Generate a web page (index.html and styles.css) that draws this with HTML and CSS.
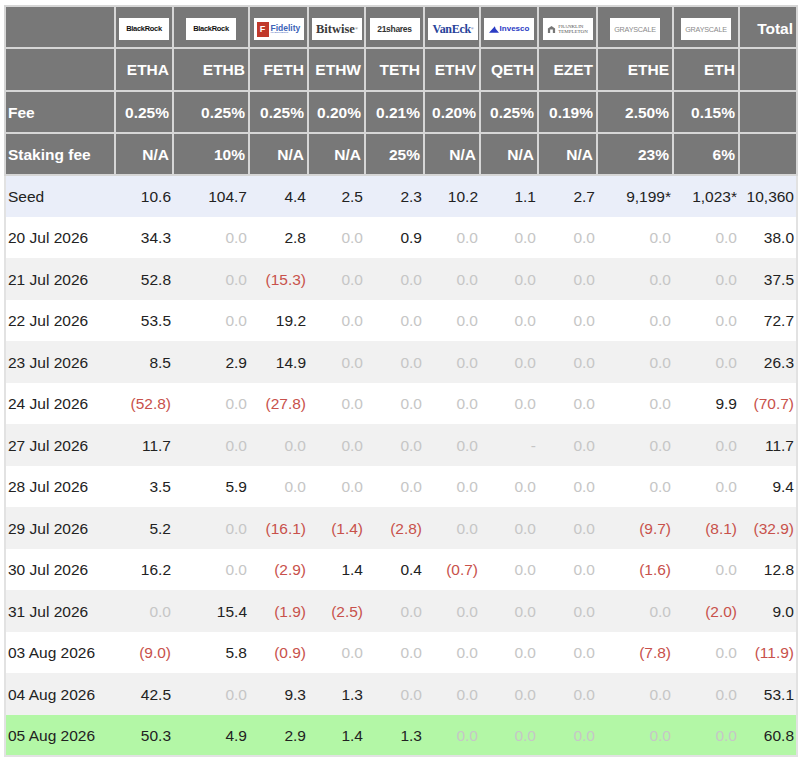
FILE: index.html
```html
<!DOCTYPE html>
<html lang="en">
<head>
<meta charset="utf-8">
<title>ETH ETF Flows</title>
<link rel="stylesheet" href="styles.css">
</head>
<body>
<table class="flows">
  <colgroup>
    <col class="c-date"><col class="c58"><col class="c76"><col class="c59"><col class="c57"><col class="c59"><col class="c56"><col class="c58"><col class="c59"><col class="c76"><col class="c66"><col class="c58">
  </colgroup>
  <thead>
    <tr class="logos">
      <th></th>
      <th><span class="logo br">BlackRock</span></th>
      <th><span class="logo br">BlackRock</span></th>
      <th><span class="logo fid"><span class="fid-f">F</span><span class="fid-t"><span class="fid-n">Fidelity</span><span class="fid-s">INVESTMENTS</span></span></span></th>
      <th><span class="logo bw">Bitwise<sup>&reg;</sup></span></th>
      <th><span class="logo sh">21shares</span></th>
      <th><span class="logo ve">VanEck<sup>&reg;</sup></span></th>
      <th><span class="logo iv"><svg class="iv-i" viewBox="0 0 12 8" width="10" height="7"><path d="M0 8 L7 0 L8 3 L12 8 Z" fill="#2b3cc4"/></svg>Invesco</span></th>
      <th><span class="logo ft"><svg class="ft-i" viewBox="0 0 10 10" width="9" height="9"><path d="M1 9 V4 L5 1 L9 4 V9 Z" fill="#777"/><rect x="3.5" y="5" width="3" height="4" fill="#fff"/></svg><span class="ft-t">FRANKLIN<br>TEMPLETON</span></span></th>
      <th><span class="logo gs">GRAYSCALE</span></th>
      <th><span class="logo gs">GRAYSCALE</span></th>
      <th class="r">Total</th>
    </tr>
    <tr>
      <th></th>
      <th class="r">ETHA</th><th class="r">ETHB</th><th class="r">FETH</th><th class="r">ETHW</th><th class="r">TETH</th><th class="r">ETHV</th><th class="r">QETH</th><th class="r">EZET</th><th class="r">ETHE</th><th class="r">ETH</th><th></th>
    </tr>
    <tr>
      <th class="l">Fee</th>
      <th class="r">0.25%</th><th class="r">0.25%</th><th class="r">0.25%</th><th class="r">0.20%</th><th class="r">0.21%</th><th class="r">0.20%</th><th class="r">0.25%</th><th class="r">0.19%</th><th class="r">2.50%</th><th class="r">0.15%</th><th></th>
    </tr>
    <tr>
      <th class="l">Staking fee</th>
      <th class="r">N/A</th><th class="r">10%</th><th class="r">N/A</th><th class="r">N/A</th><th class="r">25%</th><th class="r">N/A</th><th class="r">N/A</th><th class="r">N/A</th><th class="r">23%</th><th class="r">6%</th><th></th>
    </tr>
  </thead>
  <tbody>
    <tr class="seed"><td>Seed</td><td>10.6</td><td>104.7</td><td>4.4</td><td>2.5</td><td>2.3</td><td>10.2</td><td>1.1</td><td>2.7</td><td>9,199*</td><td>1,023*</td><td>10,360</td></tr>
    <tr><td>20 Jul 2026</td><td>34.3</td><td class="z">0.0</td><td>2.8</td><td class="z">0.0</td><td>0.9</td><td class="z">0.0</td><td class="z">0.0</td><td class="z">0.0</td><td class="z">0.0</td><td class="z">0.0</td><td>38.0</td></tr>
    <tr class="alt"><td>21 Jul 2026</td><td>52.8</td><td class="z">0.0</td><td class="n">(15.3)</td><td class="z">0.0</td><td class="z">0.0</td><td class="z">0.0</td><td class="z">0.0</td><td class="z">0.0</td><td class="z">0.0</td><td class="z">0.0</td><td>37.5</td></tr>
    <tr><td>22 Jul 2026</td><td>53.5</td><td class="z">0.0</td><td>19.2</td><td class="z">0.0</td><td class="z">0.0</td><td class="z">0.0</td><td class="z">0.0</td><td class="z">0.0</td><td class="z">0.0</td><td class="z">0.0</td><td>72.7</td></tr>
    <tr class="alt"><td>23 Jul 2026</td><td>8.5</td><td>2.9</td><td>14.9</td><td class="z">0.0</td><td class="z">0.0</td><td class="z">0.0</td><td class="z">0.0</td><td class="z">0.0</td><td class="z">0.0</td><td class="z">0.0</td><td>26.3</td></tr>
    <tr><td>24 Jul 2026</td><td class="n">(52.8)</td><td class="z">0.0</td><td class="n">(27.8)</td><td class="z">0.0</td><td class="z">0.0</td><td class="z">0.0</td><td class="z">0.0</td><td class="z">0.0</td><td class="z">0.0</td><td>9.9</td><td class="n">(70.7)</td></tr>
    <tr class="alt"><td>27 Jul 2026</td><td>11.7</td><td class="z">0.0</td><td class="z">0.0</td><td class="z">0.0</td><td class="z">0.0</td><td class="z">0.0</td><td class="z">-</td><td class="z">0.0</td><td class="z">0.0</td><td class="z">0.0</td><td>11.7</td></tr>
    <tr><td>28 Jul 2026</td><td>3.5</td><td>5.9</td><td class="z">0.0</td><td class="z">0.0</td><td class="z">0.0</td><td class="z">0.0</td><td class="z">0.0</td><td class="z">0.0</td><td class="z">0.0</td><td class="z">0.0</td><td>9.4</td></tr>
    <tr class="alt"><td>29 Jul 2026</td><td>5.2</td><td class="z">0.0</td><td class="n">(16.1)</td><td class="n">(1.4)</td><td class="n">(2.8)</td><td class="z">0.0</td><td class="z">0.0</td><td class="z">0.0</td><td class="n">(9.7)</td><td class="n">(8.1)</td><td class="n">(32.9)</td></tr>
    <tr><td>30 Jul 2026</td><td>16.2</td><td class="z">0.0</td><td class="n">(2.9)</td><td>1.4</td><td>0.4</td><td class="n">(0.7)</td><td class="z">0.0</td><td class="z">0.0</td><td class="n">(1.6)</td><td class="z">0.0</td><td>12.8</td></tr>
    <tr class="alt"><td>31 Jul 2026</td><td class="z">0.0</td><td>15.4</td><td class="n">(1.9)</td><td class="n">(2.5)</td><td class="z">0.0</td><td class="z">0.0</td><td class="z">0.0</td><td class="z">0.0</td><td class="z">0.0</td><td class="n">(2.0)</td><td>9.0</td></tr>
    <tr><td>03 Aug 2026</td><td class="n">(9.0)</td><td>5.8</td><td class="n">(0.9)</td><td class="z">0.0</td><td class="z">0.0</td><td class="z">0.0</td><td class="z">0.0</td><td class="z">0.0</td><td class="n">(7.8)</td><td class="z">0.0</td><td class="n">(11.9)</td></tr>
    <tr class="alt"><td>04 Aug 2026</td><td>42.5</td><td class="z">0.0</td><td>9.3</td><td>1.3</td><td class="z">0.0</td><td class="z">0.0</td><td class="z">0.0</td><td class="z">0.0</td><td class="z">0.0</td><td class="z">0.0</td><td>53.1</td></tr>
    <tr class="today"><td>05 Aug 2026</td><td>50.3</td><td>4.9</td><td>2.9</td><td>1.4</td><td>1.3</td><td class="z">0.0</td><td class="z">0.0</td><td class="z">0.0</td><td class="z">0.0</td><td class="z">0.0</td><td>60.8</td></tr>
  </tbody>
</table>
</body>
</html>
```
FILE: styles.css
```css
html, body {
  margin: 0;
  padding: 0;
  background: #ffffff;
}
body {
  padding: 5px 4px 0 4px;
  font-family: "Liberation Sans", Arial, sans-serif;
  font-size: 15.5px;
  color: #222222;
}
.flows {
  border-collapse: collapse;
  table-layout: fixed;
  width: 792px;
}
.c-date { width: 110px; }
.c56 { width: 56px; }
.c57 { width: 57px; }
.c58 { width: 58px; }
.c59 { width: 59px; }
.c66 { width: 66px; }
.c76 { width: 76px; }

.flows thead tr {
  height: 42.3px;
}
.flows tbody tr {
  height: 41.5px;
}
.flows th {
  background: #787878;
  color: #ffffff;
  font-weight: bold;
  border: 2px solid #d6d6d6;
  padding: 2px 3px 0 3px;
  white-space: nowrap;
  vertical-align: middle;
  text-align: center;
}
.flows tr.logos th { padding-top: 4px; }
.flows th.r { text-align: right; }
.flows th.l { text-align: left; padding-left: 2px; }

.flows td {
  padding: 2px 2px 0 2px;
  text-align: right;
  white-space: nowrap;
  vertical-align: middle;
  color: #222222;
}
.flows td:first-child {
  text-align: left;
  border-left: 2px solid #e2e2e2;
}
.flows td:last-child {
  border-right: 2px solid #e2e2e2;
}
.flows tbody tr:last-child td {
  border-bottom: 2px solid #e2e2e2;
}
.flows tr.seed td { background: #eaeef9; }
.flows tr.alt td { background: #f1f1f1; }
.flows tr.today td { background: #b3f7a6; }
.flows td.z { color: #c6c6c6; }
.flows td.n { color: #c8514b; }

/* logos */
.logo {
  display: inline-flex;
  align-items: center;
  justify-content: center;
  width: 50px;
  height: 22px;
  background: #ffffff;
  vertical-align: middle;
  overflow: hidden;
  font-weight: bold;
  line-height: 1;
}
.logo sup { font-size: 4px; vertical-align: top; font-weight: normal; }
.br {
  font-family: "Liberation Sans", Arial, sans-serif;
  font-size: 7.5px;
  color: #111111;
  letter-spacing: -0.3px;
}
.fid { gap: 2px; justify-content: flex-start; padding-left: 3px; box-sizing: border-box; }
.fid-f {
  display: inline-flex;
  align-items: center;
  justify-content: center;
  width: 12px;
  height: 15px;
  background: #c0392b;
  color: #ffffff;
  font-size: 9px;
  font-weight: bold;
}
.fid-t { display: flex; flex-direction: column; align-items: flex-start; }
.fid-n { font-size: 8.5px; color: #3d63b8; font-weight: bold; }
.fid-s { font-size: 2.5px; color: #3d63b8; font-weight: normal; }
.bw {
  font-family: "Liberation Serif", "Times New Roman", serif;
  font-size: 12.5px;
  color: #3a3a3a;
}
.sh {
  font-family: "Liberation Sans", Arial, sans-serif;
  font-size: 8.5px;
  color: #333333;
  letter-spacing: -0.3px;
}
.ve {
  font-family: "Liberation Serif", "Times New Roman", serif;
  font-size: 12px;
  color: #28439a;
  letter-spacing: -0.3px;
}
.iv {
  font-size: 8px;
  color: #2b3cc4;
  gap: 1px;
}
.ft { gap: 2px; }
.ft-t {
  font-family: "Liberation Serif", "Times New Roman", serif;
  font-size: 5px;
  color: #555555;
  font-weight: normal;
  text-align: left;
  line-height: 1.05;
}
.gs {
  font-family: "Liberation Sans", Arial, sans-serif;
  font-size: 7.2px;
  color: #8a8a8a;
  font-weight: normal;
  letter-spacing: -0.2px;
}
```
